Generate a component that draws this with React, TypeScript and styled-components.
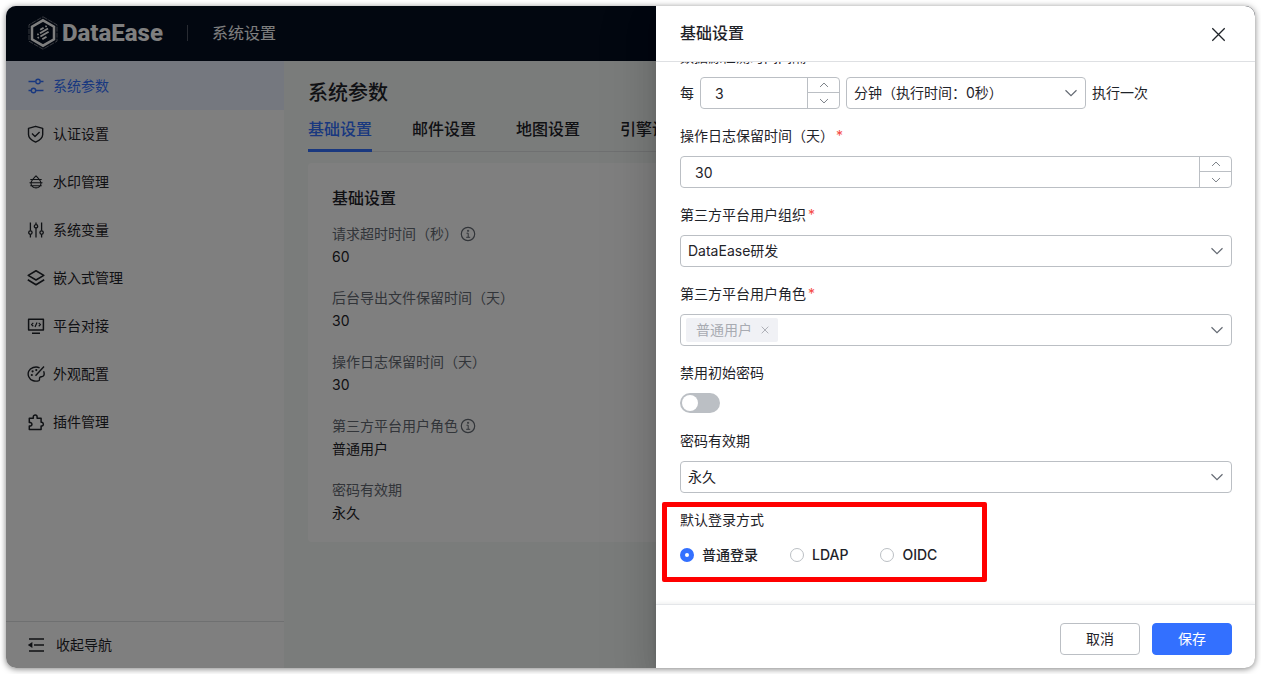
import React, { useId, useState } from 'react';
import styled, { createGlobalStyle } from 'styled-components';

const ink = '#1f2329';
const muted = '#646a73';
const line = '#bbbfc4';
const blue = '#3370ff';

const GlobalStyle = createGlobalStyle`
  *, *::before, *::after { box-sizing: border-box; }
  body {
    margin: 0;
    background: #ffffff;
    color: ${ink};
    font-family: Inter, 'Noto Sans CJK SC', sans-serif;
    font-size: 14px;
    line-height: 22px;
  }
  button, input, select { font: inherit; color: inherit; margin: 0; }
`;

const Page = styled.div`
  display: flex;
  min-height: 100vh;
  padding: 6px;
`;

const Window = styled.div`
  position: relative;
  flex: 1;
  min-width: 0;
  display: flex;
  flex-direction: column;
  overflow: hidden;
  border-radius: 10px;
  box-shadow: 0 1px 6px rgba(0, 0, 0, 0.5);
`;

const TopBar = styled.header`
  display: flex;
  align-items: center;
  height: 55px;
  padding: 0 22px 2px;
  background: #050e21;
  color: #ffffff;
`;

const Brand = styled.a`
  display: flex;
  align-items: center;
  gap: 4px;
  color: inherit;
  text-decoration: none;
  font-family: Roboto, sans-serif;
  font-size: 24px;
  font-weight: 800;
  line-height: 32px;
`;

const BarDivider = styled.span`
  width: 1px;
  height: 16px;
  margin: 0 24px;
  background: rgba(255, 255, 255, 0.3);
`;

const BarTitle = styled.span`
  font-size: 16px;
  line-height: 24px;
`;

const Columns = styled.div`
  flex: 1;
  display: flex;
`;

const Sidebar = styled.aside`
  display: flex;
  flex-direction: column;
  flex: 0 0 278px;
  background: #ffffff;
`;

const Nav = styled.nav`
  flex: 1;
`;

const NavLink = styled.a<{ $active?: boolean }>`
  display: flex;
  align-items: center;
  gap: 8px;
  height: ${(p) => (p.$active ? '49px' : '48px')};
  padding: 0 21px;
  color: ${(p) => (p.$active ? blue : ink)};
  background: ${(p) => (p.$active ? '#ebf1ff' : 'transparent')};
  text-decoration: none;
`;

const CollapseButton = styled.button`
  display: flex;
  align-items: center;
  gap: 11px;
  height: 47px;
  padding: 0 21px;
  border: 0;
  border-top: 1px solid #dee0e3;
  background: transparent;
`;

const Main = styled.main`
  flex: 1;
  min-width: 0;
  padding: 18px 24px;
  background: #f5f8f6;
`;

const PageTitle = styled.h1`
  margin: 0;
  font-size: 20px;
  font-weight: 500;
  line-height: 28px;
`;

const Tabs = styled.div`
  display: flex;
  gap: 40px;
  height: 45px;
  border-bottom: 1px solid #dee0e3;
`;

const Tab = styled.button<{ $active?: boolean }>`
  flex: none;
  height: 45px;
  padding: 2px 0 0;
  border: 0;
  border-bottom: 3px solid ${(p) => (p.$active ? blue : 'transparent')};
  background: transparent;
  color: ${(p) => (p.$active ? blue : ink)};
  font-size: 16px;
  font-weight: 500;
`;

const Card = styled.section`
  margin-top: 11px;
  padding: 23px 24px 18px;
  border-radius: 4px;
  background: #ffffff;
`;

const CardTitle = styled.h2`
  margin: 0 0 12px;
  font-size: 16px;
  font-weight: 500;
  line-height: 24px;
`;

const Facts = styled.dl`
  display: grid;
  gap: 18px;
  margin: 0;
  line-height: 23px;
`;

const FactName = styled.dt`
  display: flex;
  align-items: center;
  gap: 2px;
  color: ${muted};
`;

const FactValue = styled.dd`
  margin: 0;
`;

const Mask = styled.div`
  position: absolute;
  inset: 0;
  background: rgba(0, 0, 0, 0.5);
`;

const Drawer = styled.section`
  position: absolute;
  top: 0;
  right: 0;
  bottom: 0;
  display: flex;
  flex-direction: column;
  width: 599px;
  max-width: 100%;
  background: #ffffff;
  box-shadow: 0 16px 48px 16px rgba(0, 0, 0, 0.08), 0 12px 32px rgba(0, 0, 0, 0.12),
    0 8px 16px -8px rgba(0, 0, 0, 0.16);
`;

const DrawerHead = styled.header`
  display: flex;
  align-items: center;
  justify-content: space-between;
  flex: none;
  height: 56px;
  padding: 0 29px 0 24px;
  border-bottom: 1px solid #dee0e3;
`;

const DrawerTitle = styled.h2`
  margin: 0;
  padding-bottom: 2px;
  font-size: 16px;
  font-weight: 500;
  line-height: 24px;
`;

const CloseButton = styled.button`
  display: flex;
  padding: 2px 0 0;
  border: 0;
  background: transparent;
`;

/* Reversed column keeps the scroll position at the end of the form. */
const DrawerBody = styled.div`
  flex: 1;
  min-height: 0;
  display: flex;
  flex-direction: column-reverse;
  overflow-y: auto;
  scrollbar-width: none;
`;

const Form = styled.form`
  display: flex;
  flex-direction: column;
  flex: none;
  gap: 16px;
  padding: 24px 23px 34px 24px;
`;

const Field = styled.div`
  position: relative;
  display: flex;
  flex-direction: column;
  gap: 9px;
`;

const Label = styled.label`
  display: block;
`;

const Star = styled.span`
  margin-left: 2px;
  color: #f54a45;
`;

const Line = styled.div<{ $height?: number; $gap?: number }>`
  display: flex;
  align-items: ${(p) => (p.$height === 21 ? 'flex-start' : 'center')};
  gap: ${(p) => p.$gap ?? 6}px;
  height: ${(p) => p.$height ?? 32}px;
`;

const NumberBox = styled.div<{ $width?: string }>`
  display: flex;
  width: ${(p) => p.$width ?? '100%'};
  height: 32px;
  border: 1px solid ${line};
  border-radius: 4px;
  overflow: hidden;
`;

const NumberInput = styled.input`
  flex: 1;
  min-width: 0;
  padding: 1px 14px 0;
  border: 0;
  outline: 0;
  background: transparent;
`;

const Stepper = styled.div`
  display: grid;
  grid-template-rows: 14px 1fr;
  width: 32px;
  border-left: 1px solid ${line};
`;

const StepButton = styled.button`
  display: flex;
  align-items: center;
  justify-content: center;
  padding: 0;
  border: 0;
  background: transparent;
  color: ${muted};

  & + & { border-top: 1px solid ${line}; }
`;

const SelectBox = styled.div<{ $width?: string }>`
  display: flex;
  align-items: center;
  width: ${(p) => p.$width ?? '100%'};
  height: 32px;
  padding-right: 7px;
  border: 1px solid ${line};
  border-radius: 4px;
  color: ${muted};
`;

const Select = styled.select`
  appearance: none;
  flex: 1;
  min-width: 0;
  height: 30px;
  padding: 0 7px;
  border: 0;
  outline: 0;
  background: transparent;
  color: ${ink};
`;

const Tag = styled.span`
  display: flex;
  align-items: center;
  gap: 9px;
  height: 24px;
  margin-left: 5px;
  padding: 0 9px 0 10px;
  border-radius: 2px;
  background: #f0f1f5;
  color: #a8abb2;
`;

const TagRemove = styled.button`
  display: flex;
  padding: 0;
  border: 0;
  background: transparent;
`;

const Switch = styled.input`
  appearance: none;
  width: 40px;
  height: 20px;
  padding: 2px;
  border-radius: 10px;
  background: ${line};

  &::before {
    content: '';
    display: block;
    width: 16px;
    height: 16px;
    border-radius: 50%;
    background: #ffffff;
  }
  &:checked { background: ${blue}; }
  &:checked::before { margin-left: 20px; }
`;

const RadioLabel = styled.label`
  display: flex;
  align-items: center;
  gap: 8px;
  font-weight: 500;
`;

const Radio = styled.input`
  appearance: none;
  width: 14px;
  height: 14px;
  border: 1px solid ${line};
  border-radius: 50%;
  background: #ffffff;

  &:checked { border: 5px solid ${blue}; }
`;

const Highlight = styled.div`
  position: absolute;
  top: -7px;
  left: -18px;
  width: 325px;
  height: 80px;
  border: 5px solid #ff0000;
  border-radius: 2px;
  pointer-events: none;
`;

const DrawerFoot = styled.footer`
  display: flex;
  justify-content: flex-end;
  gap: 12px;
  flex: none;
  height: 64px;
  padding: 18px 23px 0 24px;
  border-top: 1px solid #e4e6e9;
  box-shadow: 0 -1px 4px rgba(31, 35, 41, 0.08);
`;

const Button = styled.button<{ $primary?: boolean }>`
  width: 80px;
  height: 32px;
  padding: 0;
  border: 1px solid ${(p) => (p.$primary ? blue : line)};
  border-radius: 4px;
  background: ${(p) => (p.$primary ? blue : '#ffffff')};
  color: ${(p) => (p.$primary ? '#ffffff' : ink)};
`;

const Glyph = ({ children, size = 18 }: { children: React.ReactNode; size?: number }) => (
  <svg
    width={size}
    height={size}
    viewBox="0 0 18 18"
    fill="none"
    stroke="currentColor"
    strokeWidth="1.4"
    strokeLinejoin="round"
    aria-hidden="true"
  >
    {children}
  </svg>
);

const icons = {
  params: (
    <Glyph>
      <path d="M1.5 4.5h7M13.5 4.5h3M1.5 13.5h2.500M9 13.500h7.500" />
      <circle cx="11" cy="4.500" r="2.200" />
      <circle cx="6.500" cy="13.500" r="2.200" />
    </Glyph>
  ),
  shield: (
    <Glyph>
      <path d="M8.600 1.300l7.100 2.100v6c0 3.500-3 5.800-7.100 7.700C4.500 15.200 1.500 12.900 1.500 9.400v-6z" />
      <path d="M5 8.600l3 3 4.600-4.600" />
    </Glyph>
  ),
  watermark: (
    <Glyph>
      <path
        d="M9 2.800C7.500 4.600 4 7.400 4 10.300a5 4.600 0 0010 0C14 7.400 10.500 4.600 9 2.800zM3.300 6.500h11.400M2.500 9.700h13M3.300 12.700h11.400"
        strokeWidth="1.100"
      />
    </Glyph>
  ),
  variables: (
    <Glyph>
      <path d="M3.400 1.500v8.300M3.400 13.400v3M9 1.500v2M9 7.200v9.300M14.600 1.500v8.300M14.600 13.400v3" strokeWidth="1.300" />
      <circle cx="3.400" cy="11.600" r="1.700" strokeWidth="1.300" />
      <circle cx="9" cy="5.300" r="1.700" strokeWidth="1.300" />
      <circle cx="14.600" cy="11.600" r="1.700" strokeWidth="1.300" />
    </Glyph>
  ),
  layers: (
    <Glyph>
      <path d="M9 1.800l7.800 4.600L9 11 1.200 6.400zM.8 10.800L9 15.800l8.200-5" strokeWidth="1.600" />
    </Glyph>
  ),
  platform: (
    <Glyph>
      <path d="M1.600 2.300h14.800v10.600H1.600zM5 16.300h8" strokeWidth="1.500" />
      <path d="M6.300 5.900L4.500 7.600l1.800 1.700M11.700 5.900l1.800 1.700-1.800 1.700M10 5.400L8 9.900" strokeWidth="1.200" />
    </Glyph>
  ),
  palette: (
    <Glyph>
      <path d="M12.600 2.800C8.400.9 3.300 2.700 1.700 6.300c-1.500 3.600.3 7.800 4 9.200 1.900.8 4.100.9 6.200.1 1.200-.5.200-2.300.9-3.200.8-1 3.300-.1 4-1.800.5-1.200.4-3-.2-4.300" />
      <path d="M17 1.500l-8.500 9.300" />
      <g fill="currentColor" stroke="none">
        <circle cx="9.300" cy="5.100" r="1.100" />
        <circle cx="5.600" cy="6.300" r="1.100" />
        <circle cx="4.800" cy="10" r="1.100" />
      </g>
    </Glyph>
  ),
  puzzle: (
    <Glyph>
      <path d="M2.300 5.300h4V3.800a1.900 1.900 0 013.800 0v1.500h4v4h.8a1.900 1.900 0 010 3.700h-.8v3.500H2.300v-3.400h1.200a1.900 1.900 0 000-3.700H2.300z" strokeWidth="1.500" />
    </Glyph>
  ),
  collapse: (
    <Glyph>
      <path d="M2 3h15M7 9h10M2 15h15" strokeWidth="1.600" />
      <path d="M5.400 6v6L.8 9z" fill="currentColor" stroke="none" />
    </Glyph>
  ),
};

const InfoIcon = () => (
  <svg width="16" height="16" viewBox="0 0 16 16" fill="none" stroke="currentColor" aria-hidden="true">
    <circle cx="8" cy="8" r="6.700" strokeWidth="1.200" />
    <path d="M6.500 7.200H8.200v4M6.200 11.300h4M7.500 4.300h1.200v1H7.500z" />
  </svg>
);

const Chevron = ({ up, size = 14 }: { up?: boolean; size?: number }) => (
  <svg width={size} height={size} viewBox="0 0 14 14" fill="none" stroke="currentColor" aria-hidden="true">
    <path d={up ? 'M1.500 9.700L7 4.300l5.500 5.400' : 'M1.500 4.300L7 9.700l5.500-5.400'} strokeWidth="1.200" />
  </svg>
);

const Cross = ({ size, weight }: { size: number; weight: number }) => (
  <svg width={size} height={size} viewBox="0 0 14 14" fill="none" stroke="currentColor" aria-hidden="true">
    <path d="M1.200 1.200l11.600 11.600M12.800 1.200L1.200 12.800" strokeWidth={weight} />
  </svg>
);

const Logo = () => (
  <svg width="30" height="34" viewBox="0 0 30 34" fill="none" stroke="currentColor" aria-hidden="true">
    <path d="M15 .8l14 8v16.400l-14 8-14-8V8.800z" strokeWidth=".7" strokeDasharray="5 1" opacity=".6" />
    <path d="M15 4.300l11 6.300v12.800l-11 6.300-11-6.300V10.600z" strokeWidth="2.500" />
    <path d="M12.200 13.800l3.400-2M17.400 10.800l1.300-.8M9.300 18.800l1.300-.8M12 17.200l8-4.700M9.600 22l1.300-.8M12.400 20.500l8.200-4.800M14.300 23.200l4.200-2.500" strokeWidth="1.900" />
  </svg>
);

const navItems: { icon: keyof typeof icons; text: string }[] = [
  { icon: 'params', text: '系统参数' },
  { icon: 'shield', text: '认证设置' },
  { icon: 'watermark', text: '水印管理' },
  { icon: 'variables', text: '系统变量' },
  { icon: 'layers', text: '嵌入式管理' },
  { icon: 'platform', text: '平台对接' },
  { icon: 'palette', text: '外观配置' },
  { icon: 'puzzle', text: '插件管理' },
];

const tabs = ['基础设置', '邮件设置', '地图设置', '引擎设置'];

const facts = [
  { name: '请求超时时间（秒）', value: '60', info: true },
  { name: '后台导出文件保留时间（天）', value: '30' },
  { name: '操作日志保留时间（天）', value: '30' },
  { name: '第三方平台用户角色', value: '普通用户', info: true },
  { name: '密码有效期', value: '永久' },
];

const NumberField = ({ id, start, width, label }: { id: string; start: number; width?: string; label?: string }) => {
  const [value, setValue] = useState(start);
  return (
    <NumberBox $width={width}>
      <NumberInput
        id={id}
        aria-label={label}
        inputMode="numeric"
        value={value}
        onChange={(e) => setValue(Number(e.target.value) || 0)}
      />
      <Stepper>
        <StepButton type="button" aria-label="增加" onClick={() => setValue(value + 1)}>
          <Chevron up size={10} />
        </StepButton>
        <StepButton type="button" aria-label="减少" onClick={() => setValue(value - 1)}>
          <Chevron size={10} />
        </StepButton>
      </Stepper>
    </NumberBox>
  );
};

const SelectField = ({ id, text, width, label }: { id: string; text: string; width?: string; label?: string }) => (
  <SelectBox $width={width}>
    <Select id={id} aria-label={label}>
      <option>{text}</option>
    </Select>
    <Chevron />
  </SelectBox>
);

export default function App() {
  const id = useId();
  const [login, setLogin] = useState('普通登录');

  return (
    <>
      <GlobalStyle />
      <Page>
        <Window>
          <TopBar>
            <Brand href="#">
              <Logo />
              DataEase
            </Brand>
            <BarDivider />
            <BarTitle>系统设置</BarTitle>
          </TopBar>
          <Columns>
            <Sidebar>
              <Nav>
                {navItems.map((item, i) => (
                  <NavLink key={item.text} href="#" $active={i === 0}>
                    {icons[item.icon]}
                    {item.text}
                  </NavLink>
                ))}
              </Nav>
              <CollapseButton type="button">
                {icons.collapse}
                收起导航
              </CollapseButton>
            </Sidebar>
            <Main>
              <PageTitle>系统参数</PageTitle>
              <Tabs>
                {tabs.map((tab, i) => (
                  <Tab key={tab} type="button" $active={i === 0}>
                    {tab}
                  </Tab>
                ))}
              </Tabs>
              <Card>
                <CardTitle>基础设置</CardTitle>
                <Facts>
                  {facts.map((fact) => (
                    <div key={fact.name}>
                      <FactName>
                        {fact.name}
                        {fact.info && <InfoIcon />}
                      </FactName>
                      <FactValue>{fact.value}</FactValue>
                    </div>
                  ))}
                </Facts>
              </Card>
            </Main>
          </Columns>

          <Mask />
          <Drawer role="dialog" aria-labelledby={`${id}-title`}>
            <DrawerHead>
              <DrawerTitle id={`${id}-title`}>基础设置</DrawerTitle>
              <CloseButton type="button" aria-label="关闭">
                <Cross size={15} weight={1.2} />
              </CloseButton>
            </DrawerHead>
            <DrawerBody>
              <Form onSubmit={(e) => e.preventDefault()}>
                <Field>
                  <Label htmlFor={`${id}-every`}>数据源检测时间间隔</Label>
                  <Line>
                    每
                    <NumberField id={`${id}-every`} start={3} width="140px" />
                    <SelectField id={`${id}-unit`} text="分钟（执行时间：0秒）" width="240px" label="时间单位" />
                    执行一次
                  </Line>
                </Field>
                <Field>
                  <Label htmlFor={`${id}-log`}>
                    操作日志保留时间（天）<Star>*</Star>
                  </Label>
                  <NumberField id={`${id}-log`} start={30} />
                </Field>
                <Field>
                  <Label htmlFor={`${id}-org`}>
                    第三方平台用户组织<Star>*</Star>
                  </Label>
                  <SelectField id={`${id}-org`} text="DataEase研发" />
                </Field>
                <Field>
                  <Label htmlFor={`${id}-role`}>
                    第三方平台用户角色<Star>*</Star>
                  </Label>
                  <SelectBox>
                    <Tag>
                      普通用户
                      <TagRemove type="button" aria-label="移除">
                        <Cross size={8} weight={1.6} />
                      </TagRemove>
                    </Tag>
                    <Select id={`${id}-role`} defaultValue="">
                      <option value="" />
                    </Select>
                    <Chevron />
                  </SelectBox>
                </Field>
                <Field>
                  <Label htmlFor={`${id}-initial`}>禁用初始密码</Label>
                  <Line $height={21}>
                    <Switch id={`${id}-initial`} type="checkbox" role="switch" />
                  </Line>
                </Field>
                <Field>
                  <Label htmlFor={`${id}-expiry`}>密码有效期</Label>
                  <SelectField id={`${id}-expiry`} text="永久" />
                </Field>
                <Field role="radiogroup" aria-labelledby={`${id}-login`}>
                  <Label as="span" id={`${id}-login`}>
                    默认登录方式
                  </Label>
                  <Line $height={30} $gap={32}>
                    {['普通登录', 'LDAP', 'OIDC'].map((name) => (
                      <RadioLabel key={name}>
                        <Radio type="radio" name="login" checked={login === name} onChange={() => setLogin(name)} />
                        {name}
                      </RadioLabel>
                    ))}
                  </Line>
                  <Highlight />
                </Field>
              </Form>
            </DrawerBody>
            <DrawerFoot>
              <Button type="button">取消</Button>
              <Button type="button" $primary>
                保存
              </Button>
            </DrawerFoot>
          </Drawer>
        </Window>
      </Page>
    </>
  );
}
